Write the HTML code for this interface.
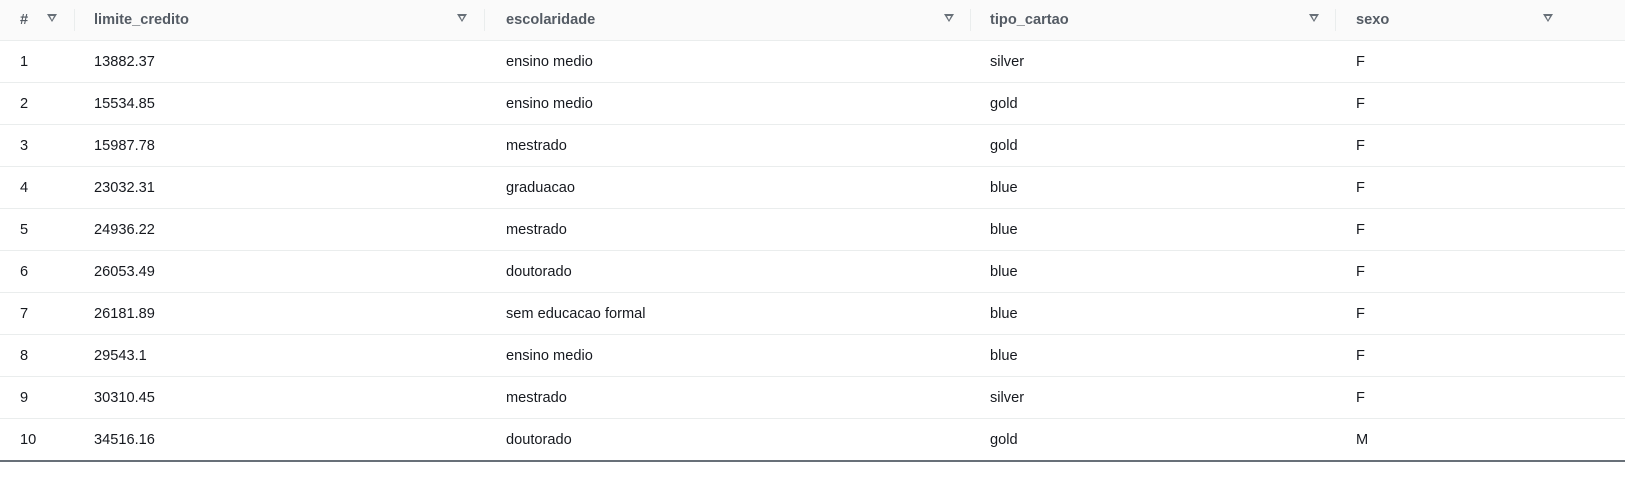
<!DOCTYPE html>
<html><head><style>
body{margin:0;width:1625px;height:479px;background:#fff;font-family:"Liberation Sans",sans-serif;font-size:14.6px;color:#16191f;position:relative;overflow:hidden}
.h{position:absolute;left:0;top:0;width:1625px;height:40px;background:#fafafa;border-bottom:1px solid #eaeded}
.h span{position:absolute;top:12px;font-weight:bold;color:#545b64}
.t{position:absolute;top:14px;width:0;height:0;border-left:5px solid transparent;border-right:5px solid transparent;border-top:8px solid #687078}
.t:after{content:"";position:absolute;left:-2.5px;top:-6.5px;border-left:2.5px solid transparent;border-right:2.5px solid transparent;border-top:4px solid #fafafa}
.d{position:absolute;top:9px;width:1px;height:22px;background:#eaeded}
.r{position:absolute;left:0;width:1625px;height:41px;border-bottom:1px solid #eaeded}
.r span{position:absolute;top:13px}
.end{position:absolute;left:0;top:460px;width:1625px;height:2px;background:#687078}
</style></head><body>
<div class="h">
<span style="left:20px">#</span><i class="t" style="left:47px"></i><i class="d" style="left:74px"></i>
<span style="left:94px">limite_credito</span><i class="t" style="left:457px"></i><i class="d" style="left:484px"></i>
<span style="left:506px">escolaridade</span><i class="t" style="left:944px"></i><i class="d" style="left:970px"></i>
<span style="left:990px">tipo_cartao</span><i class="t" style="left:1309px"></i><i class="d" style="left:1335px"></i>
<span style="left:1356px">sexo</span><i class="t" style="left:1543px"></i>
</div>
<div class="r" style="top:41px"><span style="left:20px">1</span><span style="left:94px">13882.37</span><span style="left:506px">ensino medio</span><span style="left:990px">silver</span><span style="left:1356px">F</span></div>
<div class="r" style="top:83px"><span style="left:20px">2</span><span style="left:94px">15534.85</span><span style="left:506px">ensino medio</span><span style="left:990px">gold</span><span style="left:1356px">F</span></div>
<div class="r" style="top:125px"><span style="left:20px">3</span><span style="left:94px">15987.78</span><span style="left:506px">mestrado</span><span style="left:990px">gold</span><span style="left:1356px">F</span></div>
<div class="r" style="top:167px"><span style="left:20px">4</span><span style="left:94px">23032.31</span><span style="left:506px">graduacao</span><span style="left:990px">blue</span><span style="left:1356px">F</span></div>
<div class="r" style="top:209px"><span style="left:20px">5</span><span style="left:94px">24936.22</span><span style="left:506px">mestrado</span><span style="left:990px">blue</span><span style="left:1356px">F</span></div>
<div class="r" style="top:251px"><span style="left:20px">6</span><span style="left:94px">26053.49</span><span style="left:506px">doutorado</span><span style="left:990px">blue</span><span style="left:1356px">F</span></div>
<div class="r" style="top:293px"><span style="left:20px">7</span><span style="left:94px">26181.89</span><span style="left:506px">sem educacao formal</span><span style="left:990px">blue</span><span style="left:1356px">F</span></div>
<div class="r" style="top:335px"><span style="left:20px">8</span><span style="left:94px">29543.1</span><span style="left:506px">ensino medio</span><span style="left:990px">blue</span><span style="left:1356px">F</span></div>
<div class="r" style="top:377px"><span style="left:20px">9</span><span style="left:94px">30310.45</span><span style="left:506px">mestrado</span><span style="left:990px">silver</span><span style="left:1356px">F</span></div>
<div class="r" style="top:419px;border-bottom:none"><span style="left:20px">10</span><span style="left:94px">34516.16</span><span style="left:506px">doutorado</span><span style="left:990px">gold</span><span style="left:1356px">M</span></div>
<div class="end"></div>
</body></html>
